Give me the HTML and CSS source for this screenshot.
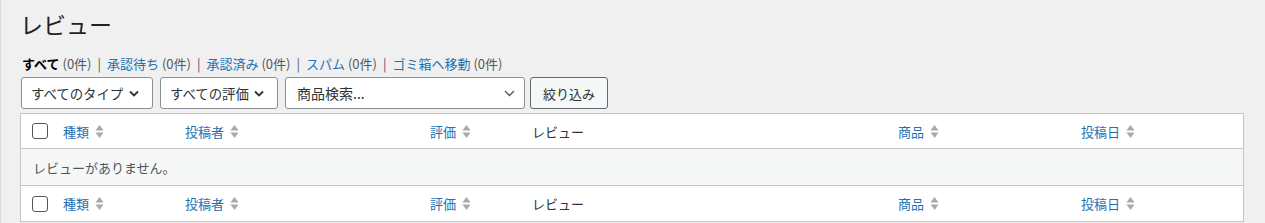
FILE: index.html
```html
<!DOCTYPE html>
<html lang="ja">
<head>
    <meta charset="UTF-8">
    <meta name="viewport" content="width=device-width, initial-scale=1.0">
    <title>レビュー</title>
    <link rel="stylesheet" href="styles.css">
</head>
<body>
    <div class="wrap">
        <h1 class="page-title">レビュー</h1>

        <ul class="subsubsub">
            <li><a class="current" href="#">すべて</a> <span class="count">(0件)</span><span class="sep">|</span></li>
            <li><a href="#">承認待ち</a> <span class="count">(0件)</span><span class="sep">|</span></li>
            <li><a href="#">承認済み</a> <span class="count">(0件)</span><span class="sep">|</span></li>
            <li><a href="#">スパム</a> <span class="count">(0件)</span><span class="sep">|</span></li>
            <li><a href="#">ゴミ箱へ移動</a> <span class="count">(0件)</span></li>
        </ul>

        <div class="tablenav">
            <button class="select type-select">
                <span>すべてのタイプ</span>
                <svg width="10" height="7" viewBox="0 0 10 7"><path d="M1 1.5l4 4 4-4" fill="none" stroke="#2c3338" stroke-width="1.8"/></svg>
            </button>
            <button class="select rating-select">
                <span>すべての評価</span>
                <svg width="10" height="7" viewBox="0 0 10 7"><path d="M1 1.5l4 4 4-4" fill="none" stroke="#2c3338" stroke-width="1.8"/></svg>
            </button>
            <button class="select product-select">
                <span>商品検索...</span>
                <svg width="11" height="7" viewBox="0 0 11 7"><path d="M1 1l4.5 4.5 4.5-4.5" fill="none" stroke="#50575e" stroke-width="1.3"/></svg>
            </button>
            <button class="btn-filter">絞り込み</button>
        </div>

        <table class="list-table">
            <colgroup>
                <col class="col-cb">
                <col class="col-type">
                <col class="col-author">
                <col class="col-rating">
                <col class="col-review">
                <col class="col-product">
                <col class="col-date">
            </colgroup>
            <thead>
                <tr>
                    <th class="check-column"><span class="checkbox"></span></th>
                    <th class="sortable"><a href="#">種類<svg class="sort" width="9" height="15" viewBox="0 0 9 15"><path d="M0.5 6.5L4.5 1 8.5 6.5z M0.5 8.5h8l-4 5.5z" fill="#a7aaad"/></svg></a></th>
                    <th class="sortable"><a href="#">投稿者<svg class="sort" width="9" height="15" viewBox="0 0 9 15"><path d="M0.5 6.5L4.5 1 8.5 6.5z M0.5 8.5h8l-4 5.5z" fill="#a7aaad"/></svg></a></th>
                    <th class="sortable"><a href="#">評価<svg class="sort" width="9" height="15" viewBox="0 0 9 15"><path d="M0.5 6.5L4.5 1 8.5 6.5z M0.5 8.5h8l-4 5.5z" fill="#a7aaad"/></svg></a></th>
                    <th class="plain">レビュー</th>
                    <th class="sortable"><a href="#">商品<svg class="sort" width="9" height="15" viewBox="0 0 9 15"><path d="M0.5 6.5L4.5 1 8.5 6.5z M0.5 8.5h8l-4 5.5z" fill="#a7aaad"/></svg></a></th>
                    <th class="sortable"><a href="#">投稿日<svg class="sort" width="9" height="15" viewBox="0 0 9 15"><path d="M0.5 6.5L4.5 1 8.5 6.5z M0.5 8.5h8l-4 5.5z" fill="#a7aaad"/></svg></a></th>
                </tr>
            </thead>
            <tbody>
                <tr class="no-items">
                    <td colspan="7">レビューがありません。</td>
                </tr>
            </tbody>
            <tfoot>
                <tr>
                    <th class="check-column"><span class="checkbox"></span></th>
                    <th class="sortable"><a href="#">種類<svg class="sort" width="9" height="15" viewBox="0 0 9 15"><path d="M0.5 6.5L4.5 1 8.5 6.5z M0.5 8.5h8l-4 5.5z" fill="#a7aaad"/></svg></a></th>
                    <th class="sortable"><a href="#">投稿者<svg class="sort" width="9" height="15" viewBox="0 0 9 15"><path d="M0.5 6.5L4.5 1 8.5 6.5z M0.5 8.5h8l-4 5.5z" fill="#a7aaad"/></svg></a></th>
                    <th class="sortable"><a href="#">評価<svg class="sort" width="9" height="15" viewBox="0 0 9 15"><path d="M0.5 6.5L4.5 1 8.5 6.5z M0.5 8.5h8l-4 5.5z" fill="#a7aaad"/></svg></a></th>
                    <th class="plain">レビュー</th>
                    <th class="sortable"><a href="#">商品<svg class="sort" width="9" height="15" viewBox="0 0 9 15"><path d="M0.5 6.5L4.5 1 8.5 6.5z M0.5 8.5h8l-4 5.5z" fill="#a7aaad"/></svg></a></th>
                    <th class="sortable"><a href="#">投稿日<svg class="sort" width="9" height="15" viewBox="0 0 9 15"><path d="M0.5 6.5L4.5 1 8.5 6.5z M0.5 8.5h8l-4 5.5z" fill="#a7aaad"/></svg></a></th>
                </tr>
            </tfoot>
        </table>
    </div>
</body>
</html>
```

FILE: styles.css
```css
* {
    margin: 0;
    padding: 0;
    box-sizing: border-box;
}

body {
    background-color: #f0f0f1;
    border-left: 1px solid #dcdcde;
    font-family: "Noto Sans CJK JP", "Noto Sans", sans-serif;
    font-size: 13px;
    color: #3c434a;
    height: 100vh;
    overflow: hidden;
}

a {
    color: #2271b1;
    text-decoration: none;
}

.wrap {
    display: flex;
    flex-direction: column;
    padding: 0 21px 0 19px;
}

.page-title {
    font-size: 23px;
    font-weight: 400;
    line-height: 30px;
    padding-top: 9px;
    color: #1d2327;
}

.subsubsub {
    display: flex;
    list-style: none;
    margin-top: 16px;
    padding-left: 2px;
    line-height: 18px;
    font-size: 13px;
    color: #646970;
}

.subsubsub .current {
    color: #000;
    font-weight: 600;
}

.subsubsub .count {
    color: #50575e;
}

.subsubsub .sep {
    color: #50575e;
    margin: 0 6px;
}

.tablenav {
    display: flex;
    margin-top: 4px;
    height: 32px;
}

.select {
    display: flex;
    align-items: center;
    justify-content: space-between;
    height: 32px;
    padding: 0 13px 0 9px;
    border: 1px solid #8c8f94;
    border-radius: 3px;
    background: #fff;
    font-family: inherit;
    font-size: 13.4px;
    color: #2c3338;
}

.type-select {
    width: 132px;
    margin-left: 1px;
}

.rating-select {
    width: 118px;
    margin-left: 7px;
}

.product-select {
    width: 240px;
    margin-left: 7px;
    padding: 0 9px 0 11px;
    font-size: 14px;
}

.btn-filter {
    width: 78px;
    height: 32px;
    margin-left: 5px;
    border: 1px solid #646970;
    border-radius: 3px;
    background: #f6f7f7;
    font-family: inherit;
    font-size: 13px;
    color: #2c3338;
}

.list-table {
    margin-top: 4px;
    width: 100%;
    table-layout: fixed;
    border-spacing: 0;
    border: 1px solid #c3c4c7;
    background: #fff;
}

.col-cb { width: 35px; }
.col-type { width: 122px; }
.col-author { width: 245px; }
.col-rating { width: 99px; }
.col-review { width: 369px; }
.col-product { width: 183px; }

.list-table th {
    text-align: left;
    font-weight: 400;
    vertical-align: middle;
    padding: 0;
}

.list-table thead th {
    height: 35px;
    border-bottom: 1px solid #c3c4c7;
}

.list-table tfoot th {
    height: 36px;
    border-top: 1px solid #c3c4c7;
    box-sizing: border-box;
}

.list-table th.plain {
    padding: 0 10px;
    color: #2c3338;
}

.sortable a {
    display: flex;
    align-items: center;
    padding: 0 7px;
}

.sort {
    margin-left: 6px;
}

.check-column {
    padding-left: 11px !important;
}

.checkbox {
    display: block;
    width: 16px;
    height: 16px;
    border: 1px solid #50575e;
    border-radius: 3px;
    background: #fff;
}

.no-items td {
    height: 36px;
    padding: 0 12px;
    background: #f6f7f7;
    color: #50575e;
    vertical-align: middle;
}
```
